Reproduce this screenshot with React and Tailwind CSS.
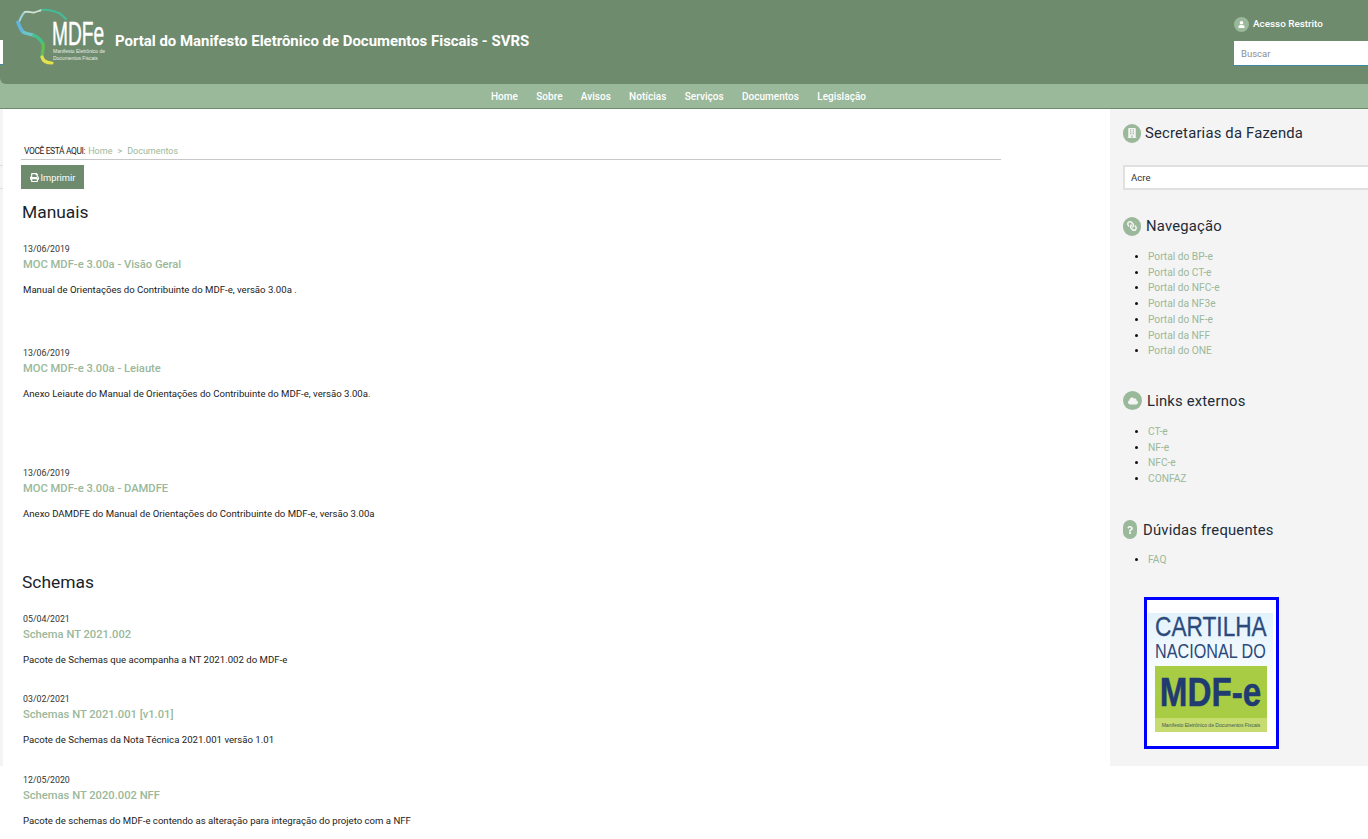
import React from 'react';
import { FaUser, FaPrint, FaLink, FaCloud, FaQuestion, FaBuilding } from 'react-icons/fa';

const navItems = ['Home', 'Sobre', 'Avisos', 'Notícias', 'Serviços', 'Documentos', 'Legislação'];

const Logo = () => (
  <div className="relative w-[92px] h-[62px] shrink-0">
    <svg width="60" height="62" viewBox="16 6 60 62" className="absolute left-0 top-0" fill="none" strokeLinejoin="round" strokeLinecap="round">
      <path d="M19 22 C21 17 23 13 25 12" stroke="#9fd3dc" strokeWidth="2" />
      <path d="M25 12 C29 11 31 13 34 12.5 C37 12 39 10.5 42 10" stroke="#cfe3d3" strokeWidth="1.8" />
      <path d="M42 10 C48 9 54 11 60 13.5 L66 19" stroke="#45bd96" strokeWidth="2.2" />
      <path d="M18 22.5 C20 27 21 31 24 32.5" stroke="#62b4dc" strokeWidth="3.6" />
      <path d="M24 32.5 C28 34 31 34.5 34 35.5" stroke="#6cc4c8" strokeWidth="3.4" />
      <path d="M34 35.5 C38 37 41 40 43 44" stroke="#44c08a" strokeWidth="3.4" />
      <path d="M43 44 C44 49 42 53 42 57" stroke="#62bf52" strokeWidth="3.2" />
      <path d="M42 57 C43 61 47 63 52 63" stroke="#e3e34c" strokeWidth="3.2" />
    </svg>
    <span className="absolute left-[36px] top-[15px] text-white text-[33px] leading-[26px] font-['Liberation_Sans',sans-serif] scale-x-[0.58] origin-left whitespace-nowrap [-webkit-text-stroke:0.5px_#ffffff]">MDFe</span>
    <span className="absolute left-[37px] top-[42px] text-[#e6eee6] text-[6px] leading-[7px] font-['Liberation_Sans',sans-serif] whitespace-nowrap scale-x-[0.83] origin-left">Manifesto Eletrônico de<br />Documentos Fiscais</span>
  </div>
);

const Doc = ({ date, title, desc, className }) => (
  <div className={className}>
    <div className="text-[8.8px] leading-[14px] text-[#333]">{date}</div>
    <a className="block text-[11.2px] leading-[18px] font-medium text-[#9ab89a]">{title}</a>
    <p className="mt-[9px] text-[9.6px] leading-[14px] text-[#222]">{desc}</p>
  </div>
);

const SideTitle = ({ icon, children, className = '', iconClass = 'w-[18px]', gapClass = 'gap-[5px]' }) => (
  <div className={`flex items-center ${gapClass} ${className}`}>
    <span className={`${iconClass} h-[19px] rounded-full bg-[#9ab89a] text-[#f4f4f4] flex items-center justify-center text-[10px] shrink-0`}>{icon}</span>
    <h3 className="text-[14.8px] leading-[20px] font-normal text-[#222b38] tracking-[0.2px]">{children}</h3>
  </div>
);

const SideList = ({ items, className = '' }) => (
  <ul className={`list-disc pl-[25px] text-[10.2px] leading-[15.7px] text-[#111] ${className}`}>
    {items.map((i) => (
      <li key={i}><a className="text-[#9ab89a]">{i}</a></li>
    ))}
  </ul>
);

export default function App() {
  return (
    <div className="w-[1368px] h-[839px] overflow-hidden bg-white font-['Roboto',sans-serif]">
      <div className="bg-[#9ab89a]">
        <header className="relative h-[84px] bg-[#6e8b6e] rounded-bl-[6px] flex pl-[16px] pt-[6px]">
          <Logo />
          <div className="absolute left-0 top-[40px] w-[3px] h-[25px] bg-white border-b border-[#3f8a9e]" />
          <h1 className="ml-[7px] mt-[25px] text-[14.93px] leading-[20px] font-bold text-white whitespace-nowrap">Portal do Manifesto Eletrônico de Documentos Fiscais - SVRS</h1>
          <div className="absolute left-[1234px] top-[16px] w-[134px]">
            <div className="flex items-center gap-[4px] h-[16px]">
              <span className="w-[15px] h-[15px] rounded-full bg-[#9ab89a] text-white flex items-center justify-center text-[7px]"><FaUser /></span>
              <span className="text-[9.9px] font-medium text-white">Acesso Restrito</span>
            </div>
            <div className="mt-[9px] h-[25px] bg-white border-b border-[#3f8a9e] pl-[7px] pt-[2px] flex items-center text-[9.5px] text-[#8a8f96]">Buscar</div>
          </div>
        </header>
        <nav className="h-[25px] border-b border-[#6e8b6e] flex justify-center items-center gap-[18.2px] text-[10px] font-medium text-white pt-[1px] pr-[11px] tracking-[0.05px]">
          {navItems.map((n) => <a key={n}>{n}</a>)}
        </nav>
      </div>
      <div className="flex h-[730px]">
        <div className="w-[3px] h-[657px] bg-[#f4f4f4] shrink-0">
          <div className="mt-[56px] h-[1px] bg-[#dddddd]" />
          <div className="mt-[22px] h-[1px] bg-[#dddddd]" />
        </div>
        <main className="w-[1107px] shrink-0 pl-[18px] pt-[36px]">
          <div className="w-[977px] h-[13px] border-b border-[#c8c8c8] text-[9px] leading-[12px] pl-[3px] pb-[1px] box-content">
            <span className="text-[#222] text-[8.5px] tracking-[-0.4px]">VOCÊ ESTÁ AQUI:</span>
            <span className="text-[#9ab89a] ml-[3px]">Home</span>
            <span className="text-[#9ab89a] mx-[5px]">&gt;</span>
            <span className="text-[#9ab89a]">Documentos</span>
          </div>
          <button className="mt-[5px] w-[63px] h-[24px] bg-[#6e8b6e] text-white text-[9.3px] pt-[1px] flex items-center justify-center gap-[2px]"><FaPrint className="text-[9px]" />Imprimir</button>
          <h2 className="ml-[1px] mt-[12px] text-[17.4px] leading-[22px] text-[#1a1f2b]">Manuais</h2>
          <div className="pl-[2px]">
            <Doc className="mt-[19px] h-[104px]" date="13/06/2019" title="MOC MDF-e 3.00a - Visão Geral" desc="Manual de Orientações do Contribuinte do MDF-e, versão 3.00a ." />
            <Doc className="h-[120px]" date="13/06/2019" title="MOC MDF-e 3.00a - Leiaute" desc="Anexo Leiaute do Manual de Orientações do Contribuinte do MDF-e, versão 3.00a." />
            <Doc className="h-[105px]" date="13/06/2019" title="MOC MDF-e 3.00a - DAMDFE" desc="Anexo DAMDFE do Manual de Orientações do Contribuinte do MDF-e, versão 3.00a" />
          </div>
          <h2 className="ml-[1px] text-[17.4px] leading-[22px] text-[#1a1f2b]">Schemas</h2>
          <div className="pl-[2px]">
            <Doc className="mt-[19px] h-[80px]" date="05/04/2021" title="Schema NT 2021.002" desc="Pacote de Schemas que acompanha a NT 2021.002 do MDF-e" />
            <Doc className="h-[81px]" date="03/02/2021" title="Schemas NT 2021.001 [v1.01]" desc="Pacote de Schemas da Nota Técnica 2021.001 versão 1.01" />
            <Doc date="12/05/2020" title="Schemas NT 2020.002 NFF" desc="Pacote de schemas do MDF-e contendo as alteração para integração do projeto com a NFF" />
          </div>
        </main>
        <aside className="w-[258px] h-[657px] bg-[#f4f4f4] shrink-0 pl-[13px] pt-[14px]">
          <SideTitle gapClass="gap-[4px]" icon={<FaBuilding />}>Secretarias da Fazenda</SideTitle>
          <div className="mt-[22px] h-[25px] bg-white border-2 border-r-0 border-[#e0e0e0] pl-[6px] pt-[1px] flex items-center text-[9.6px] text-[#333]">Acre</div>
          <SideTitle className="mt-[26px]" icon={<FaLink className="-scale-x-100" />}>Navegação</SideTitle>
          <SideList className="mt-[13px]" items={['Portal do BP-e', 'Portal do CT-e', 'Portal do NFC-e', 'Portal da NF3e', 'Portal do NF-e', 'Portal da NFF', 'Portal do ONE']} />
          <SideTitle className="mt-[32px]" iconClass="w-[19px]" icon={<FaCloud />}>Links externos</SideTitle>
          <SideList className="mt-[13px]" items={['CT-e', 'NF-e', 'NFC-e', 'CONFAZ']} />
          <SideTitle className="mt-[33px]" iconClass="w-[14px]" gapClass="gap-[6px]" icon={<FaQuestion className="text-[8px]" />}>Dúvidas frequentes</SideTitle>
          <SideList className="mt-[12px]" items={['FAQ']} />
          <div className="ml-[21px] mt-[30px] w-[135px] h-[152px] border-[3px] border-[#0000ff] bg-white pt-[13px] pl-[1px]">
            <div className="w-[125px] h-[119px] bg-gradient-to-b from-[#e2f2fb] via-[#f8fcfe] to-white px-[7px] text-[#2c4a7c] font-['Liberation_Sans',sans-serif] whitespace-nowrap">
              <div className="text-[28px] leading-[28px] scale-x-[0.81] origin-left [-webkit-text-stroke:0.3px_#2c4a7c]">CARTILHA</div>
              <div className="text-[21px] leading-[19px] scale-x-[0.77] origin-left">NACIONAL DO</div>
              <div className="mt-[6px] w-[112px] h-[66px] bg-[#a8cd44] flex flex-col">
                <div className="flex-1 pl-[6px] text-[#203a72] text-[41px] leading-[52px] font-bold scale-x-[0.81] origin-left [-webkit-text-stroke:0.5px_#203a72]">MDF-e</div>
                <div className="h-[14px] bg-[#c6dc70] text-[5px] leading-[14px] text-center text-[#3c5a50]">Manifesto Eletrônico de Documentos Fiscais</div>
              </div>
            </div>
          </div>
        </aside>
      </div>
    </div>
  );
}
